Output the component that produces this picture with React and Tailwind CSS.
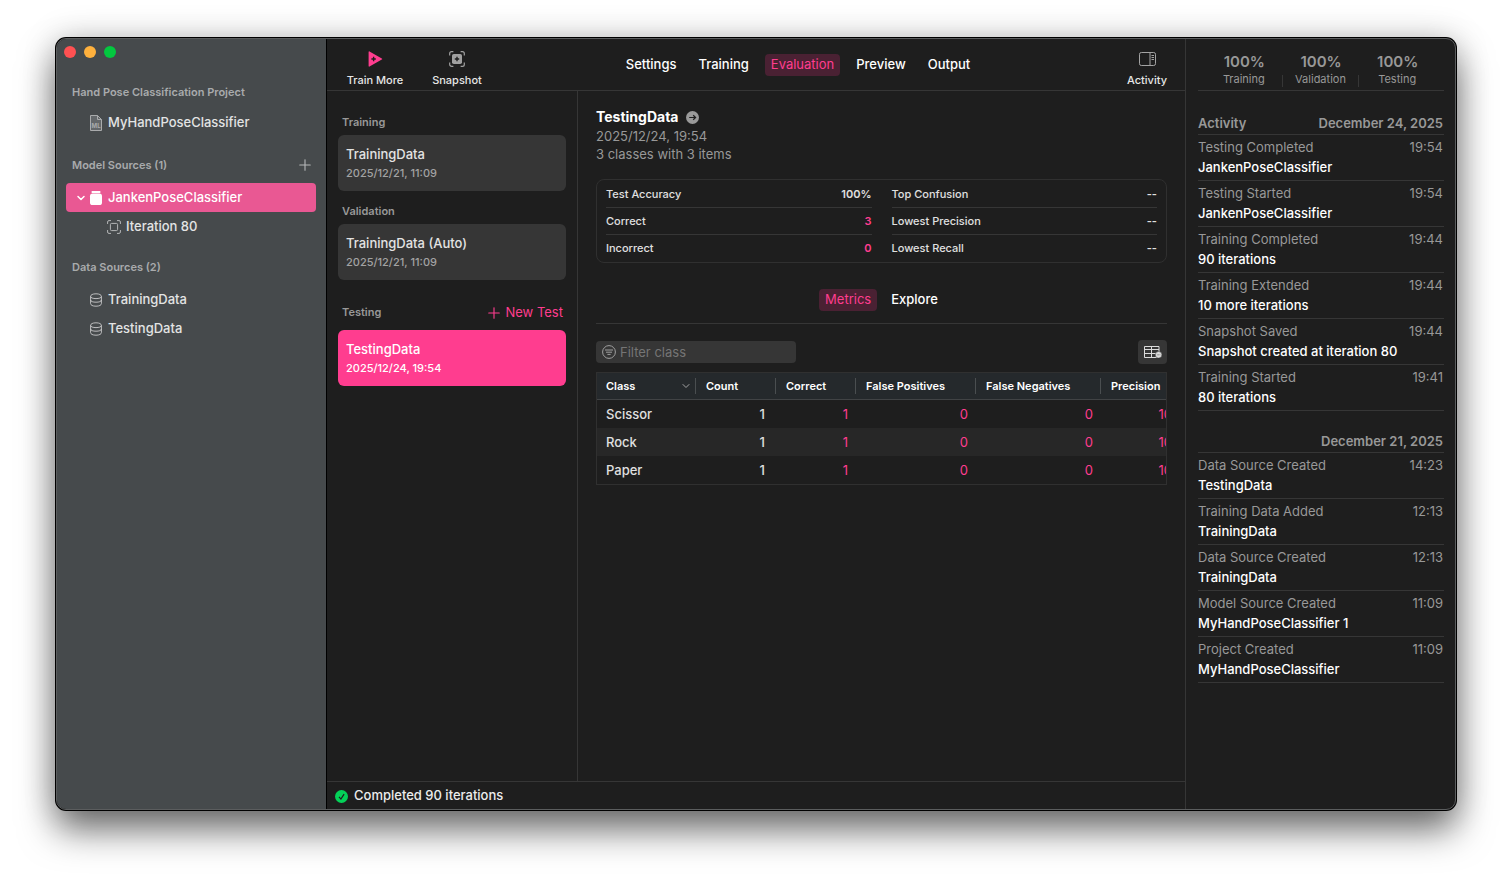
import React, { useState } from 'react';
import { ChevronDown, Plus } from 'lucide-react';

const stats = [
  { label: 'Training', value: '100%' },
  { label: 'Validation', value: '100%' },
  { label: 'Testing', value: '100%' },
];

const activity = [
  {
    title: 'Activity',
    date: 'December 24, 2025',
    events: [
      { name: 'Testing Completed', time: '19:54', detail: 'JankenPoseClassifier' },
      { name: 'Testing Started', time: '19:54', detail: 'JankenPoseClassifier' },
      { name: 'Training Completed', time: '19:44', detail: '90 iterations' },
      { name: 'Training Extended', time: '19:44', detail: '10 more iterations' },
      { name: 'Snapshot Saved', time: '19:44', detail: 'Snapshot created at iteration 80' },
      { name: 'Training Started', time: '19:41', detail: '80 iterations' },
    ],
  },
  {
    title: '',
    date: 'December 21, 2025',
    events: [
      { name: 'Data Source Created', time: '14:23', detail: 'TestingData' },
      { name: 'Training Data Added', time: '12:13', detail: 'TrainingData' },
      { name: 'Data Source Created', time: '12:13', detail: 'TrainingData' },
      { name: 'Model Source Created', time: '11:09', detail: 'MyHandPoseClassifier 1' },
      { name: 'Project Created', time: '11:09', detail: 'MyHandPoseClassifier' },
    ],
  },
];

const summary = [
  [
    { label: 'Test Accuracy', value: '100%', tone: 'font-semibold' },
    { label: 'Correct', value: '3', tone: 'font-semibold text-[#ff3d8f]' },
    { label: 'Incorrect', value: '0', tone: 'font-semibold text-[#ff3d8f]' },
  ],
  [
    { label: 'Top Confusion', value: '--', tone: 'font-semibold' },
    { label: 'Lowest Precision', value: '--', tone: 'font-semibold' },
    { label: 'Lowest Recall', value: '--', tone: 'font-semibold' },
  ],
];

const columns = [
  { name: 'Class', width: 'w-[99px]' },
  { name: 'Count', width: 'w-20' },
  { name: 'Correct', width: 'w-20' },
  { name: 'False Positives', width: 'w-[120px]' },
  { name: 'False Negatives', width: 'w-[125px]' },
  { name: 'Precision', width: 'w-[100px]' },
];

const rows = [
  { name: 'Scissor', values: ['1', '0', '0', '100%'] },
  { name: 'Rock', values: ['1', '0', '0', '100%'] },
  { name: 'Paper', values: ['1', '0', '0', '100%'] },
];

const ProjectIcon = () => (
  <svg className="w-3.5 h-4" viewBox="0 0 14 16" fill="none" stroke="#a9abac">
    <path d="M1.5 .5h7l4 4v11h-11z" fill="#63676a" />
    <path d="M8.5 .5v4h4" />
    <text x="2.6" y="13" fontSize="6" fontWeight="700" fill="#a9abac" stroke="none">ML</text>
  </svg>
);

const ModelIcon = () => (
  <svg className="w-3.5 h-4" viewBox="0 0 14 16" fill="#fff">
    <rect x="2.5" y="1" width="9" height="2" rx=".8" />
    <rect x="1" y="3.6" width="12" height="11.4" rx="2.6" />
  </svg>
);

const IterationIcon = () => (
  <svg className="w-3.5 h-3.5" viewBox="0 0 14 14" fill="none" stroke="#b4b6b7">
    <path d="M.6 4V2A1.4 1.4 0 0 1 2 .6h2M10 .6h2A1.4 1.4 0 0 1 13.4 2v2M13.4 10v2a1.4 1.4 0 0 1-1.4 1.4h-2M4 13.4H2A1.4 1.4 0 0 1 .6 12v-2" />
    <rect x="3.4" y="3.4" width="7.2" height="7.2" rx="1.2" />
  </svg>
);

const DatabaseIcon = () => (
  <svg className="w-3.5 h-3.5" viewBox="0 0 14 14" fill="none" stroke="#c9cacb" strokeWidth=".9">
    <path d="M1.6 3.4C1.6 1.9 3.6 .8 7 .8s5.4 1.1 5.4 2.6v7.2c0 1.5-2 2.6-5.4 2.6s-5.4-1.1-5.4-2.6z" />
    <path d="M1.6 3.4C1.6 4.9 4 5.6 7 5.6s5.4-.7 5.4-2.2M1.6 7c0 1.5 2.4 2.2 5.4 2.2s5.4-.7 5.4-2.2" />
  </svg>
);

const TrainIcon = () => (
  <svg className="w-4 h-4" viewBox="0 0 16 16">
    <path d="M1.6 .9v14.2c0 .5.5.7.9.5l12.3-7c.5-.3.5-.9 0-1.2L2.5.4c-.4-.2-.9 0-.9.5z" fill="#ff3d8f" />
    <path d="M6.6 5.8v4.4M4.4 8h4.4" stroke="#1e1e1e" strokeWidth="1.4" />
  </svg>
);

const SnapshotIcon = () => (
  <svg className="w-4 h-4" viewBox="0 0 16 16" fill="none" stroke="#a0a0a0" strokeWidth="1.2">
    <path d="M.7 4.4V2.6A1.9 1.9 0 0 1 2.6.7h1.8M11.6.7h1.8a1.9 1.9 0 0 1 1.9 1.9v1.8M15.3 11.6v1.8a1.9 1.9 0 0 1-1.9 1.9h-1.8M4.4 15.3H2.6a1.9 1.9 0 0 1-1.9-1.9v-1.8" />
    <rect x="3" y="3" width="10" height="10" rx="1.8" fill="#a0a0a0" stroke="none" />
    <path d="M8 5.8v4.4M5.8 8h4.4" stroke="#1e1e1e" strokeWidth="1.4" />
  </svg>
);

const ActivityIcon = () => (
  <svg className="w-[18px] h-4" viewBox="0 0 18 16" fill="none" stroke="#a3a3a3">
    <rect x="1.5" y="1.5" width="16" height="13" rx="1.8" />
    <path d="M12 1.5v13M13.5 4.5H16M13.5 6.5H16M13.5 8.5H16" />
  </svg>
);

const ArrowIcon = () => (
  <svg className="w-[13px] h-[13px]" viewBox="0 0 13 13">
    <circle cx="6.5" cy="6.5" r="6.5" fill="#9a9a9a" />
    <path d="M3.2 6.5h6.4M7.2 4.2l2.4 2.3-2.4 2.3" fill="none" stroke="#1e1e1e" strokeWidth="1.2" />
  </svg>
);

const FilterIcon = () => (
  <svg className="w-3.5 h-3.5 shrink-0" viewBox="0 0 14 14" fill="none" stroke="#a0a0a0">
    <circle cx="7" cy="7" r="6.4" />
    <path d="M3 5h8M4 7.2h6M5.4 9.4h3.2" />
  </svg>
);

const TableIcon = () => (
  <svg className="w-[18px] h-3.5" viewBox="0 0 18 14" fill="none" stroke="#dcdcdc">
    <path d="M.5 1.5h14.5v11H.5zM.5 4.5h14.5M.5 8.5h14.5M7.5 1.5v11" />
    <circle cx="14.6" cy="9.8" r="3.3" fill="#dcdcdc" stroke="#363636" strokeWidth=".5" />
    <path d="M12.9 9.8h.8M14.2 9.8h.8M15.5 9.8h.8" stroke="#666" strokeWidth=".8" />
  </svg>
);

const DoneIcon = () => (
  <svg className="w-[13px] h-[13px]" viewBox="0 0 13 13">
    <circle cx="6.5" cy="6.5" r="6.5" fill="#04d158" />
    <path d="M4 6.9l1.9 2.2 3.2-5" fill="none" stroke="#1e1e1e" strokeWidth="1.2" />
  </svg>
);

const SourceRow = ({ icon, name, indent }) => (
  <a href="#" className={`flex items-center h-[29px] gap-[5px] text-[13px] font-medium text-[#e3e4e4] ${indent}`}>
    {icon}
    {name}
  </a>
);

const Sidebar = () => (
  <aside className="w-[270px] shrink-0 bg-[#464a4c] border-r border-black pl-[9px] pr-2.5 pt-[7px]">
    <div className="flex gap-2 -ml-0.5">
      <button aria-label="Close" className="w-3 h-3 rounded-full bg-[#ff5152]"></button>
      <button aria-label="Minimize" className="w-3 h-3 rounded-full bg-[#ffb13d]"></button>
      <button aria-label="Zoom" className="w-3 h-3 rounded-full bg-[#03c83f]"></button>
    </div>

    <h2 className="mt-[26px] px-1.5 text-[11px] leading-4 font-semibold text-[#a9abac]">
      Hand Pose Classification Project
    </h2>
    <div className="mt-2">
      <SourceRow icon={<ProjectIcon />} name="MyHandPoseClassifier" indent="pl-[23px]" />
    </div>

    <div className="mt-5 h-4 pl-1.5 pr-0.5 flex items-center justify-between">
      <h2 className="text-[11px] leading-4 font-semibold text-[#a9abac]">Model Sources (1)</h2>
      <button aria-label="Add model source" className="text-[#b5b7b8]">
        <Plus size={18} strokeWidth={1.5} />
      </button>
    </div>
    <div className="mt-2.5">
      <a href="#" className="flex items-center h-[29px] pt-px pl-[9px] rounded bg-[#e95893] text-[13px] font-medium text-white">
        <ChevronDown size={12} strokeWidth={3} />
        <span className="flex items-center gap-[5px] pl-0.5">
          <ModelIcon />
          JankenPoseClassifier
        </span>
      </a>
      <SourceRow icon={<IterationIcon />} name="Iteration 80" indent="pl-[41px]" />
    </div>

    <h2 className="mt-[18px] px-1.5 text-[11px] leading-4 font-semibold text-[#a9abac]">Data Sources (2)</h2>
    <div className="mt-2.5">
      <SourceRow icon={<DatabaseIcon />} name="TrainingData" indent="pl-[23px]" />
      <SourceRow icon={<DatabaseIcon />} name="TestingData" indent="pl-[23px]" />
    </div>
  </aside>
);

const Toolbar = () => {
  const [tab, setTab] = useState('Evaluation');

  return (
    <header className="h-[52px] shrink-0 flex items-center justify-between pl-5 pr-0.5 border-b border-[#363636]">
      <div className="flex gap-[26px] pt-2.5 text-[11px] leading-4 font-medium text-[#e6e6e6]">
        <button className="w-14 flex flex-col items-center gap-[5px] whitespace-nowrap">
          <TrainIcon />
          Train More
        </button>
        <button className="w-14 flex flex-col items-center gap-[5px] whitespace-nowrap">
          <SnapshotIcon />
          Snapshot
        </button>
      </div>
      <nav className="flex gap-2.5 pt-px text-[13px]">
        {['Settings', 'Training', 'Evaluation', 'Preview', 'Output'].map((name) => (
          <button
            key={name}
            onClick={() => setTab(name)}
            className={`h-[22px] px-1.5 rounded ${
              tab === name ? 'bg-[#4a2133] text-[#ff3d8f]' : 'font-medium text-white'
            }`}
          >
            {name}
          </button>
        ))}
      </nav>
      <button className="w-[72px] pt-2.5 flex flex-col items-center gap-[5px] text-[11px] leading-4 font-medium text-[#e6e6e6]">
        <ActivityIcon />
        Activity
      </button>
    </header>
  );
};

const DataCard = ({ name, date, selected }) => (
  <button
    className={`block w-full h-14 px-2 rounded-md text-left ${
      selected ? 'bg-[#ff3d8f] text-white' : 'bg-[#363636] text-[#e3e3e3]'
    }`}
  >
    <span className="block text-[13px] leading-5 font-medium">{name}</span>
    <span className={`block text-[11px] leading-[18px] font-medium ${selected ? 'text-white' : 'text-[#a3a3a3]'}`}>
      {date}
    </span>
  </button>
);

const DataList = () => (
  <section className="w-[251px] shrink-0 border-r border-[#363636] px-[11px] pt-[23px]">
    <h2 className="px-1 mb-[5px] text-[11px] leading-4 font-semibold text-[#989898]">Training</h2>
    <DataCard name="TrainingData" date="2025/12/21, 11:09" />

    <h2 className="px-1 mt-3 mb-[5px] text-[11px] leading-4 font-semibold text-[#989898]">Validation</h2>
    <DataCard name="TrainingData (Auto)" date="2025/12/21, 11:09" />

    <div className="mt-5 mb-1.5 h-6 pl-1 pr-[3px] flex items-center justify-between">
      <h2 className="text-[11px] leading-4 font-semibold text-[#989898]">Testing</h2>
      <button className="flex items-center gap-0.5 pt-px text-[13px] text-[#ff3d8f]">
        <Plus size={18} strokeWidth={1.5} />
        New Test
      </button>
    </div>
    <DataCard name="TestingData" date="2025/12/24, 19:54" selected />
  </section>
);

const MetricsTable = () => (
  <div className="mt-2 border border-[#303030] overflow-hidden">
    <table className="table-fixed w-[604px] border-separate border-spacing-0">
      <thead>
        <tr className="bg-[#25292c]">
          {columns.map((col) => (
            <th
              key={col.name}
              className={`h-[27px] p-0 border-b border-[#414345] text-left text-[11px] font-semibold text-white ${col.width}`}
            >
              <div
                className={`flex items-center justify-between h-4 pr-[3px] border-r border-[#4a4e50] ${
                  col.name === 'Class' ? 'pl-[9px]' : 'pl-2.5'
                }`}
              >
                {col.name}
                {col.name === 'Class' && <ChevronDown size={12} strokeWidth={2} className="text-[#a3a3a3]" />}
              </div>
            </th>
          ))}
        </tr>
      </thead>
      <tbody>
        {rows.map((row) => (
          <tr key={row.name} className="h-7 text-[13px] text-[#e0e0e0] even:bg-[#272727]">
            <td className="p-0 pt-0.5 pl-[9px] font-medium">{row.name}</td>
            <td className="p-0 pt-0.5 pr-[11px] font-medium text-right">1</td>
            {row.values.map((value, idx) => (
              <td key={idx} className="p-0 pt-0.5 pr-2 text-right text-[#ff3d8f]">
                {value}
              </td>
            ))}
          </tr>
        ))}
      </tbody>
    </table>
  </div>
);

const Evaluation = () => (
  <main className="flex-1 min-w-0 px-[18px] pt-4">
    <div className="flex items-center gap-2 h-5">
      <h1 className="text-[14px] leading-5 font-bold text-white">TestingData</h1>
      <button aria-label="Show data source">
        <ArrowIcon />
      </button>
    </div>
    <p className="text-[13px] leading-[18px] text-[#989898]">2025/12/24, 19:54</p>
    <p className="text-[13px] leading-[18px] text-[#989898]">3 classes with 3 items</p>

    <div className="mt-4 grid grid-cols-2 gap-5 px-[9px] pt-px rounded-lg border border-[#303030]">
      {summary.map((group, idx) => (
        <dl key={idx} className="text-[11px] font-medium text-[#e0e0e0]">
          {group.map((item) => (
            <div
              key={item.label}
              className="h-[27px] flex items-center justify-between border-b border-[#363636] last:border-transparent"
            >
              <dt>{item.label}</dt>
              <dd className={item.tone}>{item.value}</dd>
            </div>
          ))}
        </dl>
      ))}
    </div>

    <div className="mt-[26px] pb-3 flex justify-center gap-2 text-[13px] border-b border-[#363636]">
      <button className="h-[22px] px-1.5 rounded bg-[#4a2133] text-[#ff3d8f]">Metrics</button>
      <button className="h-[22px] px-1.5 rounded font-medium text-white">Explore</button>
    </div>

    <div className="mt-4 flex items-center justify-between">
      <label className="w-[200px] h-[22px] px-1.5 flex items-center gap-1 rounded bg-[#363636]">
        <FilterIcon />
        <input
          type="text"
          aria-label="Filter class"
          placeholder="Filter class"
          className="w-full pt-px bg-transparent text-[13px] text-white placeholder:text-[#757575] outline-none"
        />
      </label>
      <button aria-label="Table columns" className="w-[29px] h-6 flex items-center justify-center rounded bg-[#363636]">
        <TableIcon />
      </button>
    </div>

    <MetricsTable />
  </main>
);

const ActivityPanel = () => (
  <aside className="w-[270px] shrink-0 border-l border-[#363636] pl-3 pr-[11px]">
    <div className="h-[52px] flex px-2 border-b border-[#363636]">
      {stats.map((stat) => (
        <div key={stat.label} className="flex-1 flex flex-col text-center text-[#989898] pt-3.5 group">
          <span className="text-[15px] leading-[18px] font-semibold">{stat.value}</span>
          <span className="mt-1 h-3 text-[11px] leading-2 border-r border-[#363636] group-last:border-transparent">
            {stat.label}
          </span>
        </div>
      ))}
    </div>

    <div className="mt-[21px] flex flex-col gap-[19px] text-[13px]">
      {activity.map((group) => (
        <section key={group.date}>
          <div className="h-[23px] pt-0.5 pr-px flex items-center justify-between border-b border-[#363636] font-semibold text-[#989898]">
            <h2>{group.title}</h2>
            <span>{group.date}</span>
          </div>
          {group.events.map((event, idx) => (
            <div key={idx} className="h-[46px] pt-0.5 pr-px leading-5 border-b border-[#363636]">
              <div className="flex justify-between text-[#989898]">
                <span>{event.name}</span>
                <span>{event.time}</span>
              </div>
              <p className="font-medium text-white">{event.detail}</p>
            </div>
          ))}
        </section>
      ))}
    </div>
  </aside>
);

const App = () => (
  <div className="min-h-screen flex px-14 pt-[38px] pb-[74px] bg-white font-['Inter',sans-serif]">
    <div className="flex-1 flex overflow-hidden rounded-[10px] border border-[#5b5d5e] bg-[#1e1e1e] shadow-[0_0_0_1px_#000,0_20px_36px_rgba(0,0,0,0.55),0_0_34px_rgba(0,0,0,0.2)]">
      <Sidebar />
      <div className="flex-1 min-w-0 flex flex-col">
        <Toolbar />
        <div className="flex-1 flex">
          <DataList />
          <Evaluation />
        </div>
        <footer className="h-7 shrink-0 flex items-center gap-1.5 px-2 pt-px border-t border-[#363636] text-[13px] font-medium text-[#ececec]">
          <DoneIcon />
          Completed 90 iterations
        </footer>
      </div>
      <ActivityPanel />
    </div>
  </div>
);

export default App;
